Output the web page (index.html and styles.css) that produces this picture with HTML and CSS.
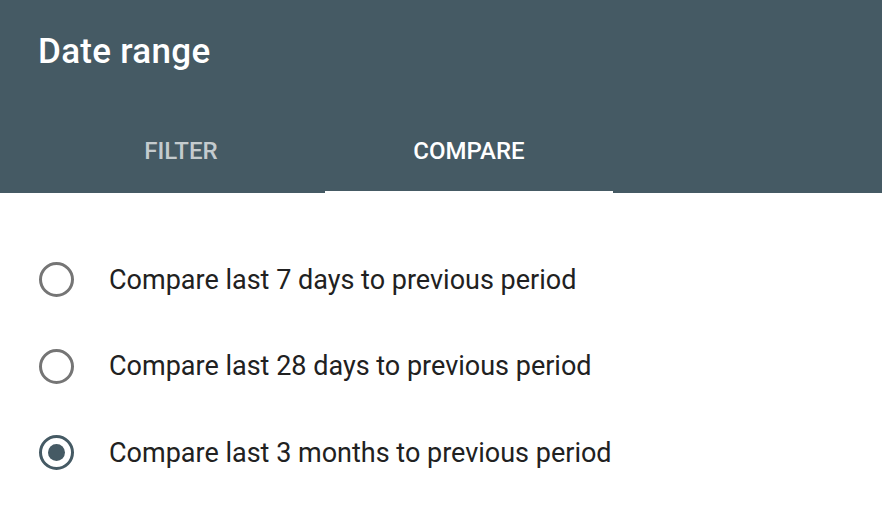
FILE: index.html
```html
<!DOCTYPE html>
<html>
<head>
  <meta charset="UTF-8" />
  <title>Date range</title>
  <link rel="stylesheet" href="styles.css">
</head>
<body>
  <header class="dialog-header">
    <h1 class="dialog-title">Date range</h1>
    <nav class="tabs">
      <div class="tab">FILTER</div>
      <div class="tab active">COMPARE</div>
    </nav>
  </header>
  <ul class="options">
    <li class="option">
      <span class="radio"></span>
      <span class="label">Compare last 7 days to previous period</span>
    </li>
    <li class="option">
      <span class="radio"></span>
      <span class="label">Compare last 28 days to previous period</span>
    </li>
    <li class="option">
      <span class="radio checked"></span>
      <span class="label">Compare last 3 months to previous period</span>
    </li>
  </ul>
</body>
</html>
```

FILE: styles.css
```css
body {
  margin: 0;
  font-family: Roboto, "Liberation Sans", sans-serif;
  background: #fff;
}

.dialog-header {
  background: #455a64;
  height: 193px;
  display: flex;
  flex-direction: column;
}
.dialog-title {
  margin: 0;
  padding: 32px 0 0 38px;
  height: 109px;
  flex-shrink: 0;
  box-sizing: border-box;
  font-size: 35px;
  line-height: 40px;
  font-weight: 500;
  letter-spacing: 0.3px;
  color: #fff;
}

.tabs {
  display: flex;
  padding-left: 37px;
  height: 84px;
  flex-shrink: 0;
}
.tab {
  width: 288px;
  display: flex;
  align-items: center;
  justify-content: center;
  font-size: 24px;
  font-weight: 500;
  color: rgba(255, 255, 255, 0.7);
  box-sizing: border-box;
  border-bottom: 2px solid transparent;
  padding-top: 2px;
}
.tab.active {
  color: #fff;
  border-bottom-color: #fff;
}

.options {
  margin: 0;
  padding: 43.5px 0 0 0;
  list-style: none;
}
.option {
  height: 86.5px;
  display: flex;
  align-items: center;
  padding-left: 39px;
}
.radio {
  width: 35px;
  height: 35px;
  box-sizing: border-box;
  border: 3px solid #757575;
  border-radius: 50%;
  display: flex;
  align-items: center;
  justify-content: center;
  flex-shrink: 0;
}
.radio.checked {
  border-color: #455a64;
}
.radio.checked::after {
  content: "";
  width: 17px;
  height: 17px;
  border-radius: 50%;
  background: #455a64;
}
.label {
  margin-left: 35px;
  font-size: 27px;
  color: #212121;
}
```
